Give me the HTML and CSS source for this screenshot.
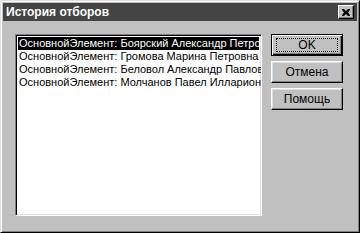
FILE: index.html
```html
<!DOCTYPE html>
<html>

<head>
    <meta charset="utf-8">
    <title>История отборов</title>
    <link rel="stylesheet" href="styles.css">
</head>

<body>
    <div class="window col">
        <div class="titlebar row">
            <span class="title">История отборов</span>
            <button class="close-btn nosel" aria-label="Закрыть">
                <svg width="8" height="7" viewBox="0 0 8 7">
                    <path d="M0 0h2l2 2 2-2h2v1l-2 2.5 2 2.5v1h-2l-2-2-2 2h-2v-1l2-2.5-2-2.5z" fill="#000"/>
                </svg>
            </button>
        </div>
        <div class="content row">
            <ul class="listbox l-none">
                <li class="item selected">ОсновнойЭлемент: Боярский Александр Петрович</li>
                <li class="item">ОсновнойЭлемент: Громова Марина Петровна</li>
                <li class="item">ОсновнойЭлемент: Беловол Александр Павлович</li>
                <li class="item">ОсновнойЭлемент: Молчанов Павел Илларионович</li>
            </ul>
            <div class="buttons col">
                <button class="win-btn default nosel"><span class="focus">OK</span></button>
                <button class="win-btn nosel"><span>Отмена</span></button>
                <button class="win-btn nosel"><span>Помощь</span></button>
            </div>
        </div>
    </div>
</body>

</html>
```

FILE: styles.css
```css
html, body {
    margin: 0;
    padding: 0;
}

body {
    width: 360px;
    height: 233px;
    background: #c0c0c0;
    font-family: "Liberation Sans", Arial, sans-serif;
    font-size: 11px;
}

.row {
    display: flex;
    flex-direction: row;
}

.col {
    display: flex;
    flex-direction: column;
}

.l-none {
    list-style: none;
}

.window {
    box-sizing: border-box;
    width: 360px;
    height: 233px;
    padding: 2px;
    background: #c0c0c0;
    border: 1px solid;
    border-color: #dfdfdf #000 #000 #dfdfdf;
    box-shadow: inset 1px 1px #fff, inset -1px -1px #808080;
}

.titlebar {
    height: 18px;
    align-items: center;
    justify-content: space-between;
    background: #444;
    padding: 0 3px 0 3px;
}

.title {
    color: #fff;
    font-weight: bold;
    font-size: 12px;
}

.close-btn {
    box-sizing: border-box;
    width: 16px;
    height: 14px;
    padding: 0;
    display: flex;
    align-items: center;
    justify-content: center;
    background: #c0c0c0;
    border: 1px solid;
    border-color: #fff #000 #000 #fff;
    box-shadow: inset -1px -1px #808080;
}

.content {
    flex: 1;
    padding: 13px 14px 12px 12px;
}

.listbox {
    box-sizing: border-box;
    margin: 0;
    padding: 0;
    width: 248px;
    height: 182px;
    overflow: hidden;
    background: #fff;
    border: 1px solid;
    border-color: #808080 #fff #fff #808080;
    box-shadow: inset 1px 1px #000, inset -1px -1px #dfdfdf;
    padding: 2px 2px;
}

.item {
    height: 13px;
    line-height: 13px;
    white-space: nowrap;
    padding-left: 1px;
    color: #000;
}

.item.selected {
    background: #000;
    color: #fff;
}

.buttons {
    margin-left: 9px;
    gap: 5px;
}

.win-btn {
    box-sizing: border-box;
    width: 72px;
    height: 22px;
    padding: 0;
    font-family: inherit;
    font-size: 12px;
    color: #000;
    background: #c0c0c0;
    border: 1px solid;
    border-color: #fff #000 #000 #fff;
    box-shadow: inset -1px -1px #808080, inset 1px 1px #dfdfdf;
    display: flex;
    align-items: center;
    justify-content: center;
}

.win-btn.default {
    border: 1px solid #000;
    box-shadow: inset 1px 1px #fff, inset -1px -1px #000, inset -2px -2px #808080;
}

.win-btn .focus {
    box-sizing: border-box;
    width: 62px;
    height: 14px;
    line-height: 12px;
    border: 1px dotted #000;
    text-align: center;
}

.nosel {
    user-select: none;
}
```
